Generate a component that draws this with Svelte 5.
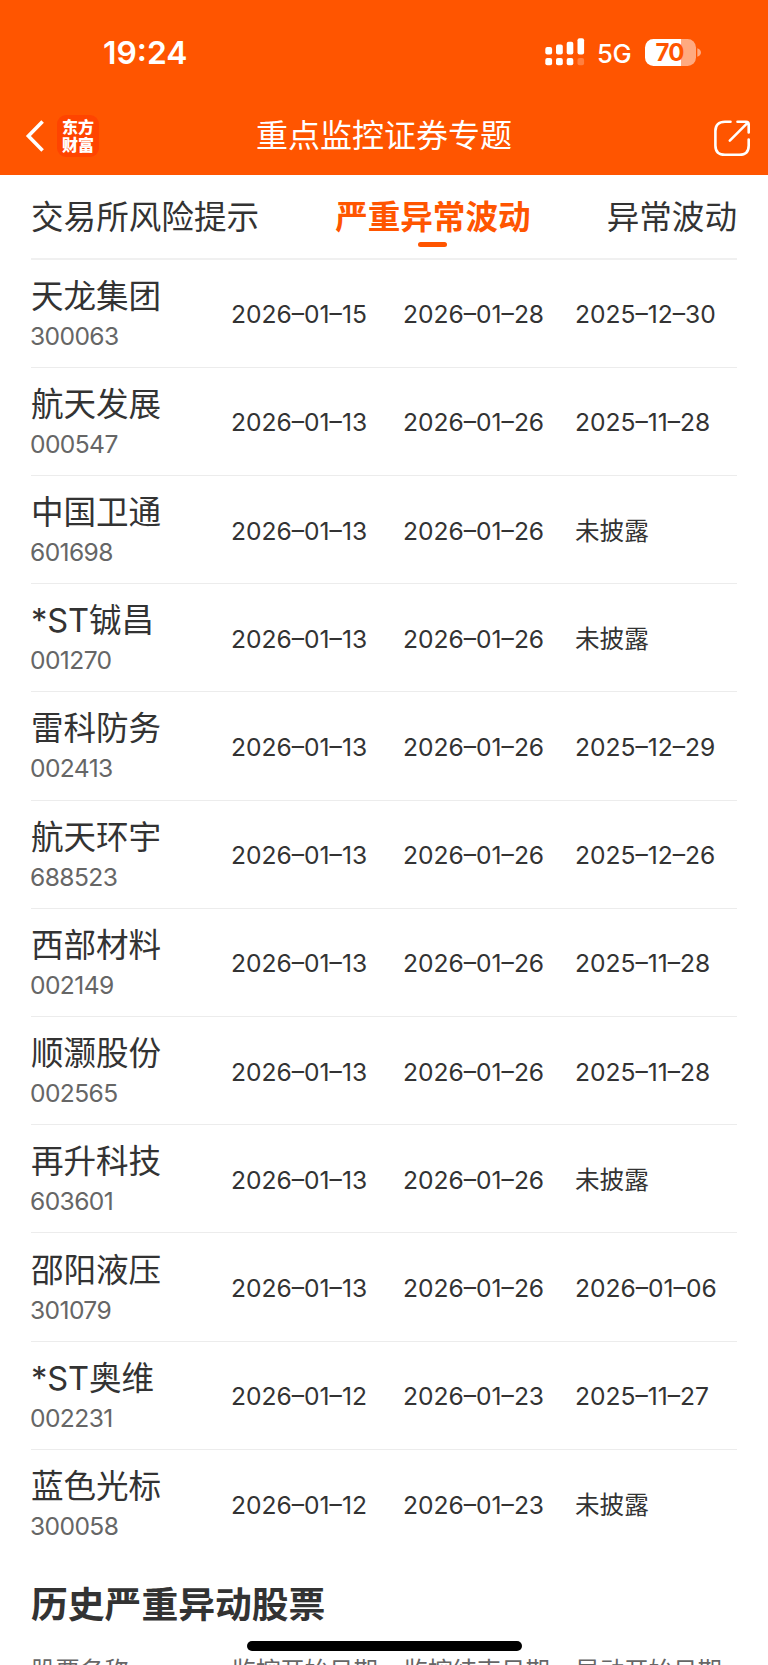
<script lang="ts">
  interface Stock {
    name: string
    code: string
    start: string
    end: string
    moved: string
  }

  const tabs = ['交易所风险提示', '严重异常波动', '异常波动']
  let active = $state(1)

  const stocks: Stock[] = [
    { name: '天龙集团', code: '300063', start: '2026–01–15', end: '2026–01–28', moved: '2025–12–30' },
    { name: '航天发展', code: '000547', start: '2026–01–13', end: '2026–01–26', moved: '2025–11–28' },
    { name: '中国卫通', code: '601698', start: '2026–01–13', end: '2026–01–26', moved: '未披露' },
    { name: '*ST铖昌', code: '001270', start: '2026–01–13', end: '2026–01–26', moved: '未披露' },
    { name: '雷科防务', code: '002413', start: '2026–01–13', end: '2026–01–26', moved: '2025–12–29' },
    { name: '航天环宇', code: '688523', start: '2026–01–13', end: '2026–01–26', moved: '2025–12–26' },
    { name: '西部材料', code: '002149', start: '2026–01–13', end: '2026–01–26', moved: '2025–11–28' },
    { name: '顺灏股份', code: '002565', start: '2026–01–13', end: '2026–01–26', moved: '2025–11–28' },
    { name: '再升科技', code: '603601', start: '2026–01–13', end: '2026–01–26', moved: '未披露' },
    { name: '邵阳液压', code: '301079', start: '2026–01–13', end: '2026–01–26', moved: '2026–01–06' },
    { name: '*ST奥维', code: '002231', start: '2026–01–12', end: '2026–01–23', moved: '2025–11–27' },
    { name: '蓝色光标', code: '300058', start: '2026–01–12', end: '2026–01–23', moved: '未披露' },
  ]
</script>

<div class="screen">
  <header>
    <div class="status">
      <span class="time">19:24</span>
      <div class="signals">
        <svg class="bars" width="40" height="28" viewBox="0 0 40 28" fill="#fff">
          <rect x="0.3" y="9" width="6.8" height="7.4" rx="2" />
          <rect x="11" y="6.6" width="6.8" height="9.8" rx="2" />
          <rect x="21.7" y="3.8" width="6.6" height="12.6" rx="2" />
          <rect x="32.5" y="0.3" width="6.6" height="16.1" rx="2" />
          <rect x="0.3" y="20" width="6.8" height="7.2" rx="2" />
          <rect x="11" y="20" width="6.8" height="7.2" rx="2" />
          <rect x="21.7" y="20" width="6.6" height="7.2" rx="2" />
          <rect x="32.5" y="20" width="6.6" height="7.2" rx="2" opacity="0.25" />
        </svg>
        <span class="network">5G</span>
        <div class="battery"><span>70</span></div>
        <svg class="nub" width="5" height="9" viewBox="0 0 5 9">
          <path d="M0.3 0.3C2.8 1 4 2.7 4 4.5S2.8 8 0.3 8.7Z" fill="#fff" opacity="0.5" />
        </svg>
      </div>
    </div>
    <div class="nav">
      <svg class="back" width="20" height="32" viewBox="0 0 20 32">
        <path d="M17.6 1.6L3.4 16L17.6 30.4" fill="none" stroke="#fff" stroke-width="3.6" />
      </svg>
      <div class="logo"><span>东方</span><span>财富</span></div>
      <h1>重点监控证券专题</h1>
      <svg class="share" width="38" height="38" viewBox="0 0 38 38" fill="none" stroke="#fff" stroke-width="2.6" stroke-linecap="round">
        <path d="M17.5 2.8H12Q2.4 2.8 2.4 12V26.5Q2.4 35.8 12 35.8H26.5Q35.7 35.8 35.7 26.5V20.5" />
        <path d="M24.5 2.8H33Q35.7 2.8 35.7 5.6V13.5M34.3 4.2L16.8 21.7" />
      </svg>
    </div>
  </header>

  <div class="tabs" role="tablist">
    {#each tabs as tab, i}
      <button role="tab" aria-selected={active === i} class:active={active === i} onclick={() => (active = i)}>
        {tab}
      </button>
    {/each}
  </div>

  <main>
    {#each stocks as s (s.code)}
      <div class="row">
        <div class="stock">
          <span class="name">{s.name}</span>
          <span class="code">{s.code}</span>
        </div>
        <span class="date">{s.start}</span>
        <span class="date">{s.end}</span>
        <span class="date">{s.moved}</span>
      </div>
    {/each}
    <h2>历史严重异动股票</h2>
    <div class="columns">
      <span>股票名称</span>
      <span>监控开始日期</span>
      <span>监控结束日期</span>
      <span>异动开始日期</span>
    </div>
  </main>
  <div class="home"></div>
</div>

<style>
  :global(body) {
    margin: 0;
    background: #fff;
  }
  .screen {
    position: relative;
    width: 768px;
    height: 1665px;
    overflow: hidden;
    background: #fff;
    color: #333;
    font-family: Inter, 'Noto Sans CJK SC', sans-serif;
  }
  header {
    height: 175px;
    background: #ff5500;
    color: #fff;
  }
  .status {
    display: flex;
    justify-content: space-between;
    height: 104px;
    padding: 0 66px 0 103px;
  }
  .time {
    margin-top: 33px;
    font-size: 31.8px;
    font-weight: 600;
    line-height: 40px;
  }
  .signals {
    display: flex;
    align-items: center;
    height: 28px;
    margin-top: 38px;
  }
  .network {
    width: 36px;
    margin: 3px 12px 0 12px;
    font-size: 25.6px;
    font-weight: 500;
    letter-spacing: -0.4px;
  }
  .battery {
    width: 51px;
    height: 27px;
    border-radius: 8.5px;
    background: linear-gradient(90deg, #fff 36px, #ffaa80 36px);
    color: #ff5500;
    text-align: center;
    font-size: 24px;
    font-weight: 700;
    line-height: 27px;
    letter-spacing: -0.8px;
  }
  .battery span {
    margin-right: 2px;
  }
  .nub {
    margin-left: 1px;
  }
  .nav {
    display: flex;
    align-items: center;
    height: 64px;
    padding: 0 17px 0 25px;
  }
  .logo {
    display: flex;
    flex-direction: column;
    align-items: center;
    justify-content: center;
    width: 42px;
    height: 42px;
    margin-left: 12px;
    border-radius: 9px;
    background: #ff4400;
    font-size: 16px;
    font-weight: 900;
    line-height: 18px;
  }
  h1 {
    flex: 1;
    margin: 0 0 0 157px;
    font-size: 32px;
    font-weight: 400;
    line-height: 40px;
  }
  .share {
    margin-top: 4px;
  }
  .tabs {
    display: flex;
    justify-content: space-between;
    height: 82.5px;
    margin: 0 31px;
    border-bottom: 2px solid #f0f0f0;
  }
  .tabs button {
    display: flex;
    flex-direction: column;
    align-items: center;
    padding: 18px 0 0;
    border: 0;
    background: none;
    color: inherit;
    font: inherit;
    font-size: 32.6px;
    line-height: 48px;
  }
  .tabs .active {
    color: #ff5500;
    font-weight: 700;
  }
  .tabs .active::after {
    content: '';
    width: 29px;
    height: 5px;
    margin-top: 1px;
    border-radius: 3px;
    background: #ff5500;
  }
  .row,
  .columns {
    display: grid;
    grid-template-columns: 200.5px 172px 172px 1fr;
    margin: 0 31px;
  }
  .row {
    box-sizing: border-box;
    height: 108.22px;
    align-items: center;
    border-bottom: 1.5px solid #ececec;
  }
  .row:nth-child(12) {
    border-color: transparent;
  }
  .stock {
    display: flex;
    flex-direction: column;
    padding-top: 1px;
  }
  .name {
    font-size: 32.6px;
    line-height: 44px;
    letter-spacing: -0.1px;
  }
  .code {
    margin-left: -1px;
    color: #666;
    font-size: 24.6px;
    line-height: 36px;
    letter-spacing: -0.6px;
  }
  .date {
    margin-left: -0.5px;
    padding-top: 2px;
    font-size: 24.6px;
    line-height: 36px;
  }
  h2 {
    margin: 21px 31px 0;
    font-size: 36.8px;
    font-weight: 700;
    line-height: 52px;
  }
  .columns {
    margin-top: 21px;
    color: #666;
    font-size: 24.4px;
    line-height: 36px;
  }
  .home {
    position: absolute;
    left: 246.5px;
    bottom: 14px;
    width: 275px;
    height: 10px;
    border-radius: 5px;
    background: #000;
  }
</style>
